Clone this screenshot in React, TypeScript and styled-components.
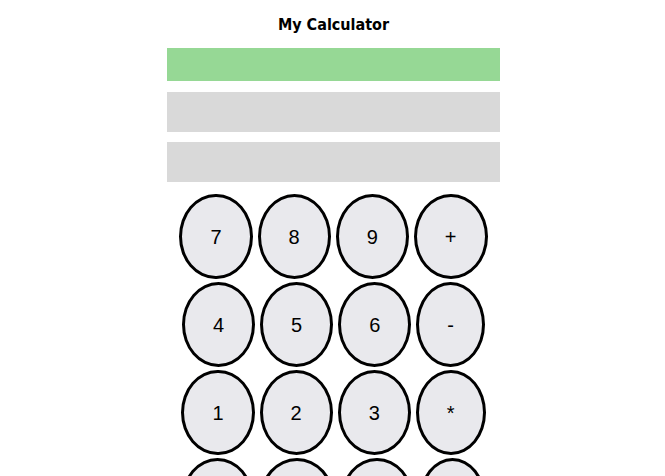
import React from "react";
import styled, { createGlobalStyle } from "styled-components";

const GlobalStyle = createGlobalStyle`
  html, body {
    margin: 0;
    padding: 0;
    background: #ffffff;
  }
  body {
    font-family: "Liberation Sans", Arial, sans-serif;
  }
`;

const Page = styled.div`
  display: flex;
  flex-direction: column;
  align-items: center;
  padding-left: 2px;
`;

const Title = styled.h1`
  margin: 15px 0 0;
  font-family: "DejaVu Sans Condensed", "DejaVu Sans", Verdana, sans-serif;
  font-stretch: condensed;
  font-weight: bold;
  font-size: 16px;
  line-height: 19px;
  color: #000;
`;

const Displays = styled.div`
  display: flex;
  flex-direction: column;
  width: 333px;
  margin-top: 14px;
`;

const Bar = styled.div<{ $tone: "result" | "input"; $h: number; $gap: number }>`
  height: ${(p) => p.$h}px;
  margin-top: ${(p) => p.$gap}px;
  background: ${(p) => (p.$tone === "result" ? "#96d895" : "#d9d9d9")};
`;

const Keypad = styled.div`
  display: flex;
  flex-direction: column;
  gap: 3px;
  margin-top: 12px;
`;

const KeyRow = styled.div`
  display: flex;
  justify-content: center;
  gap: 5px;
`;

const Key = styled.button`
  height: 85px;
  padding: 0 28px;
  border: 3px solid #000;
  border-radius: 50%;
  background: #e9e9ed;
  color: #000;
  font-family: "Liberation Sans", Arial, sans-serif;
  font-size: 20px;
  line-height: 1;
  cursor: pointer;
`;

const rows = [
  ["7", "8", "9", "+"],
  ["4", "5", "6", "-"],
  ["1", "2", "3", "*"],
  ["0", "C", "=", "/"],
];

export default function App() {
  return (
    <>
      <GlobalStyle />
      <Page>
        <Title>My Calculator</Title>
        <Displays>
          <Bar $tone="result" $h={33} $gap={0} />
          <Bar $tone="input" $h={40} $gap={11} />
          <Bar $tone="input" $h={40} $gap={10} />
        </Displays>
        <Keypad>
          {rows.map((r, i) => (
            <KeyRow key={i}>
              {r.map((k) => (
                <Key key={k}>{k}</Key>
              ))}
            </KeyRow>
          ))}
        </Keypad>
      </Page>
    </>
  );
}
